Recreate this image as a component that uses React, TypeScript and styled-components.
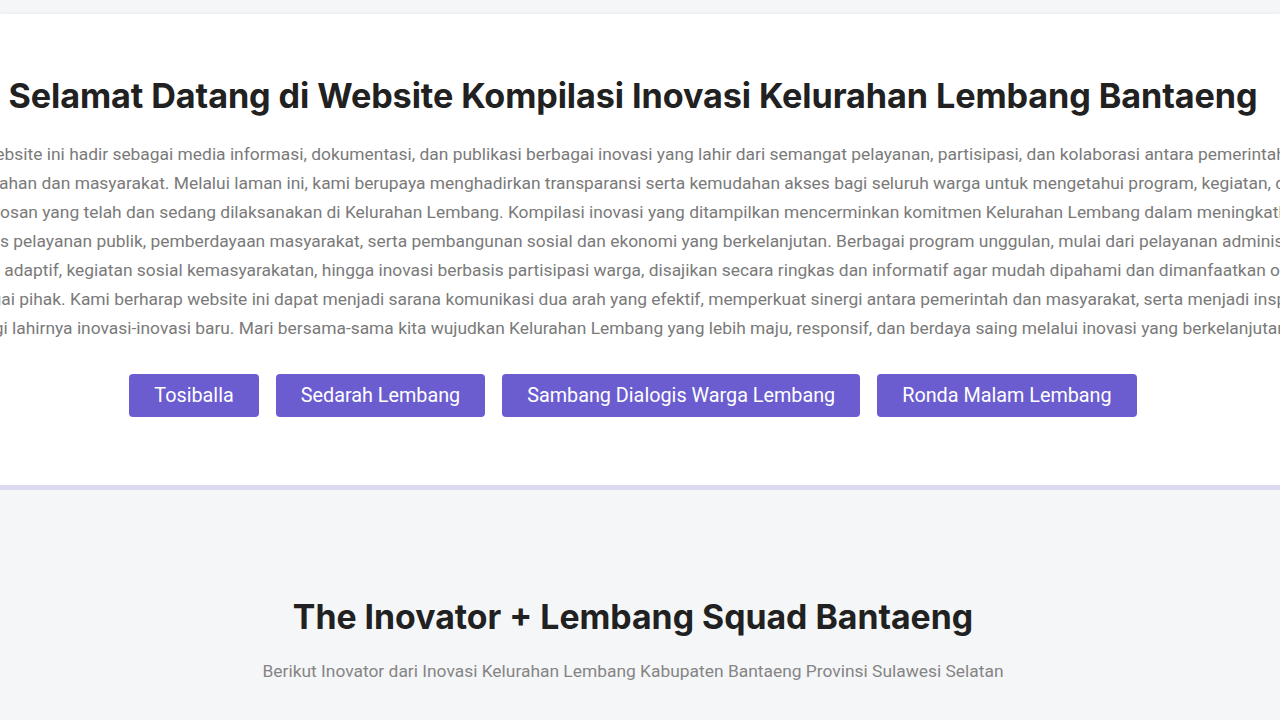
import React from "react";
import styled, { createGlobalStyle } from "styled-components";

const Global = createGlobalStyle`
  html, body { margin: 0; padding: 0; }
  body {
    background: #f5f6f8;
    font-family: Roboto, "Liberation Sans", sans-serif;
    overflow: hidden;
    width: 1280px;
  }
`;

const Page = styled.div`
  display: flex;
  flex-direction: column;
  padding-top: 14px;
`;

const HeroCard = styled.section`
  background: #ffffff;
  border-bottom: 5px solid #dcd9f1;
  box-shadow: 0 -1px 3px rgba(0, 0, 0, 0.04);
  padding: 62px 14px 68px 0;
  display: flex;
  flex-direction: column;
  align-items: center;
`;

const Title = styled.h1`
  margin: 0;
  font-family: Inter, "Noto Sans", sans-serif;
  font-weight: 700;
  font-size: 34.2px;
  line-height: 39px;
  color: #212121;
  white-space: nowrap;
  letter-spacing: -0.1px;
`;

const Paragraph = styled.div`
  margin-top: 25px;
  display: flex;
  flex-direction: column;
  align-items: center;
  width: 100%;
`;

const Line = styled.span`
  display: block;
  white-space: nowrap;
  font-size: 17.4px;
  line-height: 29px;
  color: #7a7a7a;
`;

const ButtonRow = styled.div`
  display: flex;
  gap: 17px;
  margin-top: 31px;
`;

const Button = styled.a`
  display: inline-flex;
  align-items: center;
  justify-content: center;
  height: 43px;
  padding: 0 25px;
  background: #6b5dd0;
  color: #ffffff;
  border-radius: 4px;
  font-size: 19.8px;
  text-decoration: none;
  box-sizing: border-box;
`;

const SquadSection = styled.section`
  padding: 107px 14px 0 0;
  display: flex;
  flex-direction: column;
  align-items: center;
`;

const SquadTitle = styled.h2`
  margin: 0;
  font-family: Inter, "Noto Sans", sans-serif;
  font-weight: 700;
  font-size: 33.8px;
  line-height: 39px;
  color: #212121;
  white-space: nowrap;
`;

const Subtitle = styled.p`
  margin: 23px 0 0;
  font-size: 17.4px;
  line-height: 24px;
  color: #858585;
  white-space: nowrap;
`;

const lines = [
  "Website ini hadir sebagai media informasi, dokumentasi, dan publikasi berbagai inovasi yang lahir dari semangat pelayanan, partisipasi, dan kolaborasi antara pemerintah",
  "kelurahan dan masyarakat. Melalui laman ini, kami berupaya menghadirkan transparansi serta kemudahan akses bagi seluruh warga untuk mengetahui program, kegiatan, dan",
  "terobosan yang telah dan sedang dilaksanakan di Kelurahan Lembang. Kompilasi inovasi yang ditampilkan mencerminkan komitmen Kelurahan Lembang dalam meningkatkan",
  "kualitas pelayanan publik, pemberdayaan masyarakat, serta pembangunan sosial dan ekonomi yang berkelanjutan. Berbagai program unggulan, mulai dari pelayanan administrasi",
  "yang adaptif, kegiatan sosial kemasyarakatan, hingga inovasi berbasis partisipasi warga, disajikan secara ringkas dan informatif agar mudah dipahami dan dimanfaatkan oleh",
  "berbagai pihak. Kami berharap website ini dapat menjadi sarana komunikasi dua arah yang efektif, memperkuat sinergi antara pemerintah dan masyarakat, serta menjadi inspirasi",
  "bagi lahirnya inovasi-inovasi baru. Mari bersama-sama kita wujudkan Kelurahan Lembang yang lebih maju, responsif, dan berdaya saing melalui inovasi yang berkelanjutan.",
];

const buttons = [
  "Tosiballa",
  "Sedarah Lembang",
  "Sambang Dialogis Warga Lembang",
  "Ronda Malam Lembang",
];

export default function App() {
  return (
    <>
      <Global />
      <Page>
        <HeroCard>
          <Title>Selamat Datang di Website Kompilasi Inovasi Kelurahan Lembang Bantaeng</Title>
          <Paragraph>
            {lines.map((l) => (
              <Line key={l}>{l}</Line>
            ))}
          </Paragraph>
          <ButtonRow>
            {buttons.map((b) => (
              <Button key={b} href="#">
                {b}
              </Button>
            ))}
          </ButtonRow>
        </HeroCard>
        <SquadSection>
          <SquadTitle>The Inovator + Lembang Squad Bantaeng</SquadTitle>
          <Subtitle>
            Berikut Inovator dari Inovasi Kelurahan Lembang Kabupaten Bantaeng Provinsi Sulawesi Selatan
          </Subtitle>
        </SquadSection>
      </Page>
    </>
  );
}
